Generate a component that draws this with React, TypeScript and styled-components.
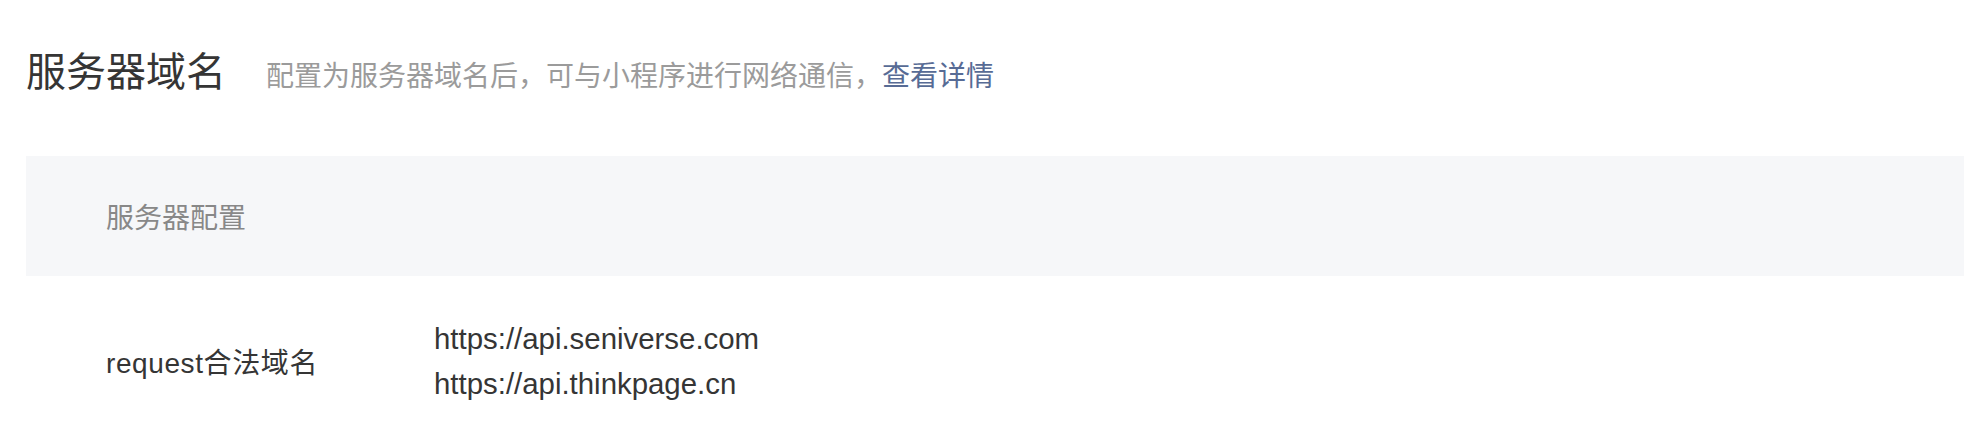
import React from "react";
import styled, { createGlobalStyle } from "styled-components";

const Global = createGlobalStyle`
  html, body { margin: 0; padding: 0; background: #ffffff; }
  body {
    font-family: "Liberation Sans", "Noto Sans CJK SC", sans-serif;
    color: #353535;
  }
`;

const Page = styled.div`
  padding: 0 0 0 26px;
  width: 1938px;
`;

const Header = styled.div`
  display: flex;
  align-items: baseline;
  height: 156px;
  box-sizing: border-box;
  padding-top: 44px;
`;

const Title = styled.h2`
  margin: 0;
  font-size: 40px;
  line-height: 56px;
  font-weight: 400;
  color: #353535;
`;

const Desc = styled.p`
  margin: 0 0 0 40px;
  font-size: 28px;
  line-height: 40px;
  color: #9b9b9b;
`;

const Link = styled.a`
  color: #576b95;
  text-decoration: none;
`;

const Band = styled.div`
  display: flex;
  align-items: center;
  height: 120px;
  padding-left: 80px;
  background: #f6f7f9;
`;

const BandLabel = styled.span`
  font-size: 28px;
  color: #888888;
`;

const Row = styled.div`
  display: flex;
  align-items: center;
  padding: 40px 0 40px 80px;
`;

const RowLabel = styled.div`
  width: 328px;
  font-size: 28px;
  letter-spacing: 0.6px;
  color: #353535;
`;

const Values = styled.div`
  display: flex;
  flex-direction: column;
`;

const Value = styled.div`
  font-size: 29.4px;
  line-height: 45px;
  color: #353535;
`;

export default function App() {
  const domains = ["https://api.seniverse.com", "https://api.thinkpage.cn"];
  return (
    <>
      <Global />
      <Page>
        <Header>
          <Title>服务器域名</Title>
          <Desc>
            配置为服务器域名后，可与小程序进行网络通信，<Link href="#">查看详情</Link>
          </Desc>
        </Header>
        <Band>
          <BandLabel>服务器配置</BandLabel>
        </Band>
        <Row>
          <RowLabel>request合法域名</RowLabel>
          <Values>
            {domains.map((d) => (
              <Value key={d}>{d}</Value>
            ))}
          </Values>
        </Row>
      </Page>
    </>
  );
}
